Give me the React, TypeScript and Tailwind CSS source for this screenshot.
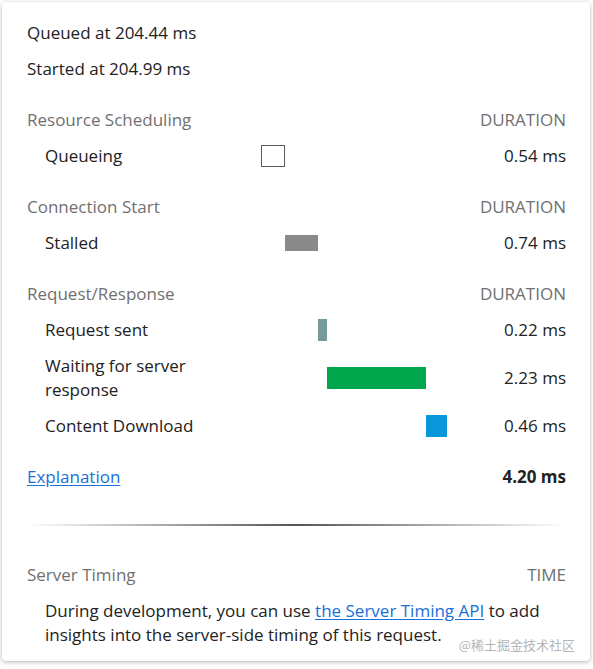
type Phase = { label: string; ms: number; kind: "queue" | "stalled" | "sent" | "wait" | "download" };
type Section = { title: string; rows: Phase[] };

const TOTAL = 4.2;
const TRACK = 186;

const sections: Section[] = [
  { title: "Resource Scheduling", rows: [{ label: "Queueing", ms: 0.54, kind: "queue" }] },
  { title: "Connection Start", rows: [{ label: "Stalled", ms: 0.74, kind: "stalled" }] },
  {
    title: "Request/Response",
    rows: [
      { label: "Request sent", ms: 0.22, kind: "sent" },
      { label: "Waiting for server response", ms: 2.23, kind: "wait" },
      { label: "Content Download", ms: 0.46, kind: "download" },
    ],
  },
];

const barClass: Record<Phase["kind"], string> = {
  queue: "h-[22px] border border-[#5c5c5c] bg-white",
  stalled: "h-[16px] bg-[#8a8a8a]",
  sent: "h-[22px] bg-[#779a9b]",
  wait: "h-[22px] bg-[#00a74c]",
  download: "h-[22px] bg-[#0996da]",
};

function Row({ phase, start }: { phase: Phase; start: number }) {
  const left = (start / TOTAL) * TRACK;
  const width = (phase.ms / TOTAL) * TRACK;
  return (
    <div className="flex items-center py-[6px] pl-[18px] text-[#222]">
      <div className="w-[168px] leading-6">{phase.label}</div>
      <div className="ml-[48px] w-[186px] flex items-center">
        <div className={barClass[phase.kind]} style={{ marginLeft: left, width }} />
      </div>
      <div className="flex-1 text-right leading-6">{phase.ms.toFixed(2)} ms</div>
    </div>
  );
}

function Header({ title, right }: { title: string; right: string }) {
  return (
    <div className="flex justify-between items-center h-[36px] text-[#707070]">
      <span>{title}</span>
      <span>{right}</span>
    </div>
  );
}

export default function App() {
  let cursor = 0;
  return (
    <div className="min-h-[669px] bg-white pt-[2px] pl-[2px] font-['Segoe_UI','Open_Sans',sans-serif] text-[17px]">
      <div className="relative w-[588px] rounded-[4px] bg-white pt-[13px] pb-[14px] pl-[25px] pr-[24px] shadow-[0_1px_4px_rgba(0,0,0,0.3)]">
        <div className="text-[#222]">
          <div className="h-[36px] flex items-center">Queued at 204.44 ms</div>
          <div className="h-[36px] flex items-center">Started at 204.99 ms</div>
        </div>

        {sections.map((s) => (
          <div key={s.title} className="mt-[15px]">
            <Header title={s.title} right="DURATION" />
            {s.rows.map((r) => {
              const start = cursor;
              cursor += r.ms;
              return <Row key={r.label} phase={r} start={start} />;
            })}
          </div>
        ))}

        <div className="mt-[15px] h-[36px] flex items-center justify-between">
          <a href="#" className="text-[#1a6fd9] underline underline-offset-2">Explanation</a>
          <span className="font-bold text-[#222]">4.20 ms</span>
        </div>

        <div className="mt-[29px] h-[2px] bg-[linear-gradient(to_right,rgba(90,90,90,0),#555_50%,rgba(90,90,90,0))]" />

        <div className="mt-[31px]">
          <Header title="Server Timing" right="TIME" />
          <p className="mt-[6px] pl-[18px] pr-[8px] leading-6 text-[#222]">
            During development, you can use{" "}
            <a href="#" className="text-[#1a6fd9] underline underline-offset-2">the Server Timing API</a> to add
            insights into the server-side timing of this request.
          </p>
        </div>

        <span className="absolute right-[15px] bottom-[7px] text-[13px] text-[#b5b5b5] font-['Noto_Sans_CJK_SC',sans-serif]">
          @稀土掘金技术社区
        </span>
      </div>
    </div>
  );
}
